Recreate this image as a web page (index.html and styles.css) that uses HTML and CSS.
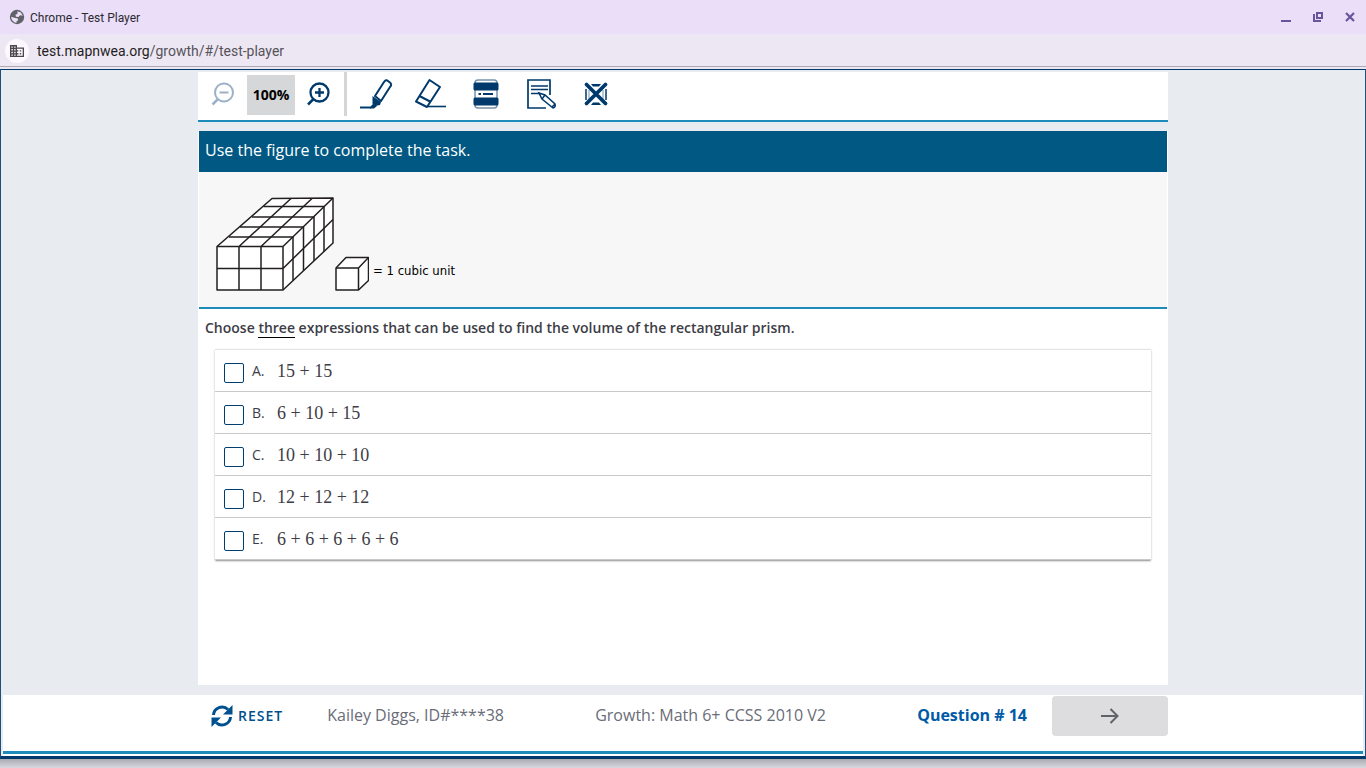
FILE: index.html
```html
<!DOCTYPE html>
<html lang="en">
<head>
<meta charset="utf-8">
<meta name="viewport" content="width=device-width, initial-scale=1">
<title>Chrome - Test Player</title>
<link rel="stylesheet" href="styles.css">
</head>
<body>
<div class="titlebar">
  <svg class="globe" width="16" height="16" viewBox="0 0 16 16" aria-hidden="true"><circle cx="8" cy="8" r="7.2" fill="#5f6368"/><path d="M8.5 2.2 12 3.5 13.7 6.7 11.2 6.2 9.4 8 7 7.7 6.5 5.8 8.5 4.8ZM2.2 7.7 5.4 8.8 8.8 9.5 9.2 11.3 7.6 12.3 7.4 13.9A6 6 0 0 1 2.2 7.7Z" fill="#eadef8"/></svg>
  <span class="window-title">Chrome - Test Player</span>
  <div class="window-controls">
    <button class="win-btn" aria-label="Minimize"><svg width="12" height="12" viewBox="0 0 12 12"><path d="M1 10h10" stroke="#68549b" stroke-width="2"/></svg></button>
    <button class="win-btn" aria-label="Restore"><svg width="12" height="12" viewBox="0 0 12 12" fill="none" stroke="#68549b" stroke-width="2"><path d="M5 2h5v5H5z"/><path d="M2 3v7h7"/></svg></button>
    <button class="win-btn" aria-label="Close"><svg width="12" height="12" viewBox="0 0 12 12"><path d="M2 2l8 8M10 2l-8 8" stroke="#68549b" stroke-width="2.2"/></svg></button>
  </div>
</div>
<div class="addressbar">
  <span class="site-icon"><svg width="14" height="12" viewBox="0 0 14 12" aria-hidden="true"><path d="M0 0h7v2.5h7V12H0z" fill="#4a474d"/><path d="M1.4 1.4h1.4v1.4H1.4zM4.2 1.4h1.4v1.4H4.2zM1.4 4.1h1.4v1.4H1.4zM4.2 4.1h1.4v1.4H4.2zM1.4 6.8h1.4v1.4H1.4zM4.2 6.8h1.4v1.4H4.2zM1.4 9.4h1.4v1.3H1.4zM4.2 9.4h1.4v1.3H4.2zM7 3.8h5.7v6.9H7V9.4h1.4V8H7V6.6h1.4V5.2H7z" fill="#fdf8ff"/><path d="M9.8 5.2h1.4v1.4H9.8zM9.8 8h1.4v1.4H9.8z" fill="#4a474d"/></svg></span>
  <span class="url"><span class="host">test.mapnwea.org</span>/growth/#/test-player</span>
</div>
<div class="player">
  <main class="column">
    <div class="toolbar">
      <button class="tool zoom-out" aria-label="Zoom out" disabled><svg width="24" height="24" viewBox="0 0 24 24" fill="none" stroke="#9bb1c8" stroke-width="2"><circle cx="13" cy="10.5" r="9"/><path d="M8.500 10.500h9"/><path d="M7 17 1.500 22.500" stroke-width="2.500"/></svg></button>
      <span class="zoom-level">100%</span>
      <button class="tool zoom-in" aria-label="Zoom in"><svg width="24" height="24" viewBox="0 0 24 24" fill="none" stroke="#003a6c" stroke-width="2.300"><circle cx="12.500" cy="10.500" r="9"/><path d="M8 10.500h9M12.500 6v9"/><path d="M6.500 17 1 22.500" stroke-width="2.500"/></svg></button>
      <span class="divider"></span>
      <div class="tool-group">
        <button class="tool" aria-label="Highlighter"><svg width="34" height="32" viewBox="0 0 34 32"><path d="M1 29.500h11" stroke="#003a6c" stroke-width="2"/><path d="M12 28 15 25 18 28 15 30.500H11z" fill="#003a6c"/><path d="M13.500 18 22 24 21 27 16 28 13.500 26z" fill="#003a6c"/><path d="M16 18 25 4Q27 1 29 3L31.500 5Q33 7 31 9L22 23z" fill="#fff" stroke="#003a6c" stroke-width="2" stroke-linejoin="round"/></svg></button>
        <button class="tool" aria-label="Eraser"><svg width="34" height="32" viewBox="0 0 34 32" fill="none" stroke="#003a6c" stroke-width="2" stroke-linejoin="round"><path d="M15.500 2 26 9 13 29 2 23.500zM5.500 18 17 24"/><path d="M14 28.500h18" stroke-width="1.600"/></svg></button>
        <button class="tool" aria-label="Line reader"><svg width="34" height="32" viewBox="0 0 34 32"><rect x="6" y="2" width="22" height="28" rx="3" fill="#fff" stroke="#7893ac" stroke-width="1.500"/><rect x="4.500" y="4.500" width="25" height="8" rx="1.500" fill="#003a6c"/><rect x="4.500" y="19.500" width="25" height="8" rx="1.500" fill="#003a6c"/><path d="M9.500 16h2.500M14 16h10" stroke="#003a6c" stroke-width="2"/></svg></button>
        <button class="tool" aria-label="Notepad"><svg width="34" height="32" viewBox="0 0 34 32" fill="none" stroke="#003a6c" stroke-width="1.700"><path d="M26 17V2H4v28h18"/><path d="M7 8h17M7 11.500h17M7 15.500h9" stroke-width="1.600"/><path d="M15 15 21 17 31 26Q32 29 29 30L18 21zM18 21 21 17M28 29 31 26" fill="#fff" stroke-width="1.500"/></svg></button>
        <button class="tool" aria-label="Answer eliminator"><svg width="34" height="32" viewBox="0 0 34 32" fill="none" stroke="#003a6c"><path d="M12 6h10l-2 2.500h-6zM12 27h10l-2-2.500h-6z" fill="#003a6c" stroke="none"/><path d="M7 11v11M27 11v11" stroke-width="1.500"/><path d="M10 12v9M24 12v9" stroke="#7893ac"/><path d="M7.500 6.500l19 19M26.500 6.500l-19 19" stroke-width="3.800" stroke-linecap="round"/></svg></button>
      </div>
    </div>
    <section class="sheet">
      <h1 class="banner">Use the figure to complete the task.</h1>
      <div class="figure-box">
        <svg class="prism" width="154" height="96" viewBox="215 196 154 96" role="img" aria-label="Rectangular prism, 3 cubes wide, 2 high and 5 deep, beside one cube" fill="none" stroke="#231f20" stroke-width="1.500" stroke-linejoin="round">
          <path d="M217 246.500 272 198.500 333 198V243L283 290H217z" fill="#fff"/>
          <path d="M217 246.500H283V290M217 268.500H283M239 290V246.500L291 198.500M261 290V246.500L312 198.500M283 246.500 333 198M283 268.500 333 219.500"/>
          <path d="M229 237H293V280.500M240 227H303.500V270.500M252 217H314V261M263.500 206.500H324V251.500"/>
          <path d="M336 268 346 257.500H368.500V280.500L358.500 290H336z" fill="#fff"/>
          <path d="M336 268H358.500V290M358.500 268 368.500 257.500"/>
        </svg>
        <span class="legend">= 1 cubic unit</span>
      </div>
      <form>
        <h2 class="prompt">Choose <span class="key">three</span> expressions that can be used to find the volume of the rectangular prism.</h2>
        <div class="choices">
          <label class="choice"><input type="checkbox"><span class="letter">A.</span><span class="math">15 + 15</span></label>
          <label class="choice"><input type="checkbox"><span class="letter">B.</span><span class="math">6 + 10 + 15</span></label>
          <label class="choice"><input type="checkbox"><span class="letter">C.</span><span class="math">10 + 10 + 10</span></label>
          <label class="choice"><input type="checkbox"><span class="letter">D.</span><span class="math">12 + 12 + 12</span></label>
          <label class="choice"><input type="checkbox"><span class="letter">E.</span><span class="math">6 + 6 + 6 + 6 + 6</span></label>
        </div>
      </form>
    </section>
  </main>
  <footer class="footer">
    <div class="footer-row">
      <button class="reset"><svg width="22" height="22" viewBox="0 0 22 22" aria-hidden="true"><path d="M2.500 10A8.500 8.500 0 0 1 17 4.500M19.500 12A8.500 8.500 0 0 1 5 17.500" fill="none" stroke="#00508f" stroke-width="3"/><path d="M21.500 0V9.500H12zM.500 22V12.500H10z" fill="#00508f"/></svg>RESET</button>
      <span class="student">Kailey Diggs, ID#****38</span>
      <span class="test-name">Growth: Math 6+ CCSS 2010 V2</span>
      <span class="question">Question # 14</span>
      <button class="next" aria-label="Next question"><svg width="18" height="16" viewBox="0 0 18 16" fill="none" stroke="#626366" stroke-width="2"><path d="M0 8h16M9.500 1 16.500 8 9.500 15"/></svg></button>
    </div>
  </footer>
</div>
<div class="shelf"></div>
</body>
</html>
```
FILE: styles.css
```css
* { box-sizing: border-box; }
body {
  margin: 0;
  min-height: 100vh;
  display: flex;
  flex-direction: column;
  font-family: "Open Sans", "Noto Sans", sans-serif;
  background: #ede7f3;
}
button { border: 0; padding: 0; background: none; font: inherit; color: inherit; }
svg { display: block; }

.titlebar {
  display: flex;
  align-items: center;
  height: 34px;
  padding: 0 10px 0 9px;
  background: #eadef8;
  font: 12px/16px Roboto, sans-serif;
  color: #2b2930;
}
.window-title { margin-left: 5px; padding-top: 2px; }
.window-controls { display: flex; gap: 20px; margin-left: auto; }

.addressbar {
  display: flex;
  align-items: center;
  height: 33px;
  padding: 2px 0 0 5px;
  background: #ede7f3;
  border-bottom: 1px solid #aea9b0;
  font: 14px/20px Roboto, sans-serif;
  color: #55525a;
}
.site-icon {
  display: grid;
  place-items: center;
  width: 24px;
  height: 24px;
  border-radius: 50%;
  background: #fdf8ff;
}
.url { margin-left: 8px; }
.host { color: #1f1d22; }

.player {
  flex: 1;
  display: flex;
  flex-direction: column;
  margin-top: 2px;
  border: 1px solid #1f4f7c;
  border-top-color: #003a6c;
  border-bottom: 3px solid #003a6c;
  background: #e8ebf0;
}
.column {
  flex: 1;
  display: flex;
  flex-direction: column;
  width: 100%;
  max-width: 970px;
  margin: 0 auto;
  padding: 2px 0 10px;
}
.toolbar {
  display: flex;
  align-items: center;
  height: 50px;
  padding: 0 13px 4px;
  background: #fff;
  border-bottom: 2px solid #1d8cba;
}
.zoom-level {
  width: 48px;
  height: 40px;
  margin: 2px 12px 0;
  background: #d6d7d9;
  color: #000;
  font-size: 14px;
  line-height: 40px;
  font-weight: 700;
  text-align: center;
}
.divider { width: 3px; height: 44px; margin-left: 13px; background: #d4d5d7; }
.tool-group { display: flex; gap: 21px; margin-left: 12px; }

.sheet { flex: 1; margin-top: 9px; padding: 0 1px; background: #fff; }
.banner {
  margin: 0;
  padding: 7px 6px 10px;
  background: #005883;
  color: #fff;
  font-size: 16px;
  line-height: 24px;
  font-weight: 400;
}
.figure-box {
  display: flex;
  align-items: flex-end;
  gap: 4px;
  padding: 24px 16px 15px;
  background: #f7f7f7;
  border-bottom: 2px solid #1d8cba;
}
.legend {
  margin-bottom: 12px;
  font: 13px/18px "DejaVu Sans Condensed", "DejaVu Sans", sans-serif;
  color: #000;
}
.prompt {
  margin: 0;
  padding: 9px 6px 10px;
  color: #3d3d46;
  font-size: 14px;
  line-height: 20px;
  font-weight: 600;
}
.key { border-bottom: 1px solid #000; }
.choices {
  margin: 1px 16px 0;
  border-top: 1px solid #e4e4e4;
  box-shadow: 0 1px 2px rgba(0, 0, 0, .3), 0 2px 1px -1px rgba(0, 0, 0, .15);
}
.choice {
  display: flex;
  align-items: center;
  height: 42px;
  padding-left: 9px;
  border-bottom: 1px solid #c9c9c9;
  color: #3d3d46;
}
.choice input {
  appearance: none;
  width: 20px;
  height: 20px;
  margin: 5px 8px 0 0;
  border: 1px solid #003f72;
  border-radius: 2px;
  background: #fff;
}
.letter { width: 25px; font-size: 14px; line-height: 20px; }
.math { font: 18px/20px "Liberation Serif", serif; }

.footer {
  margin: 0 2px 2px;
  padding: 1px 0 15px;
  background: #fff;
  border-bottom: 3px solid #1d8cba;
  box-shadow: 0 2px #fff;
}
.footer-row {
  display: flex;
  align-items: center;
  max-width: 970px;
  margin: 0 auto;
  padding-left: 13px;
  color: #6a6d78;
  font-size: 16px;
  line-height: 24px;
}
.footer-row span { padding-bottom: 2px; }
.reset {
  display: flex;
  align-items: center;
  gap: 5px;
  color: #00508f;
  font-size: 14px;
  font-weight: 600;
  letter-spacing: 1px;
}
.student { margin-left: 44px; }
.test-name { flex: 1; text-align: center; }
.question { color: #005ba6; font-weight: 700; }
.next {
  display: grid;
  place-items: center;
  width: 116px;
  height: 40px;
  margin-left: 25px;
  border-radius: 4px;
  background: #dddde0;
}
.shelf { height: 9px; background: linear-gradient(#a9abb1, #d6d9df); }
```
